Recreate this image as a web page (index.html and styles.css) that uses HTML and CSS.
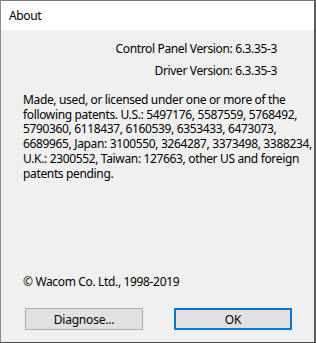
FILE: index.html
```html
<!DOCTYPE html>
<html lang="en">
<head>
  <meta charset="UTF-8">
  <title>About</title>
  <link rel="stylesheet" href="styles.css">
</head>
<body>
  <div class="window">
    <div class="title-bar">About</div>
    <div class="content">
      <div class="versions">
        <p>Control Panel Version: 6.3.35-3</p>
        <p>Driver Version: 6.3.35-3</p>
      </div>
      <p class="patents">Made, used, or licensed under one or more of the<br>following patents. U.S.: 5497176, 5587559, 5768492,<br>5790360, 6118437, 6160539, 6353433, 6473073,<br>6689965, Japan: 3100550, 3264287, 3373498, 3388234,<br>U.K.: 2300552, Taiwan: 127663, other US and foreign<br>patents pending.</p>
      <p class="copyright">&copy; Wacom Co. Ltd., 1998-2019</p>
      <div class="button-row">
        <button class="btn">Diagnose...</button>
        <button class="btn default">OK</button>
      </div>
    </div>
  </div>
</body>
</html>
```

FILE: styles.css
```css
body {
  margin: 0;
  padding: 0;
  background-color: #3a3a3a;
  font-family: "Noto Sans", "Open Sans", sans-serif;
  font-size: 12px;
  letter-spacing: -0.35px;
  color: #000;
}
.window {
  width: 313px;
  height: 341px;
  border-top: 1px solid #7a7a7a;
  border-left: 1px solid #8a8a8a;
  border-right: 2px solid #5c5c5c;
  border-bottom: 1px solid #4a4a4a;
  display: flex;
  flex-direction: column;
  overflow: hidden;
}
.title-bar {
  background-color: #fff;
  height: 29px;
  line-height: 29px;
  padding-left: 8px;
  flex-shrink: 0;
}
.content {
  flex: 1;
  background-color: #f0f0f0;
  display: flex;
  flex-direction: column;
}
.content p {
  margin: 0;
  white-space: nowrap;
}
.versions {
  text-align: right;
  padding-right: 37px;
  margin-top: 8px;
}
.versions p {
  line-height: 22px;
}
.patents {
  margin-top: 11px !important;
  padding-left: 22px;
  line-height: 14.7px;
}
.copyright {
  padding-left: 22px;
  margin-top: 93px !important;
  line-height: 16px;
}
.button-row {
  display: flex;
  gap: 31px;
  padding-left: 24px;
  margin-top: 18px;
}
.btn {
  width: 118px;
  height: 22px;
  background-color: #e1e1e1;
  border: 1px solid #adadad;
  font-family: inherit;
  font-size: 12px;
  letter-spacing: -0.2px;
  padding: 0;
  color: #000;
}
.btn.default {
  border: 2px solid #0078d7;
}
```
